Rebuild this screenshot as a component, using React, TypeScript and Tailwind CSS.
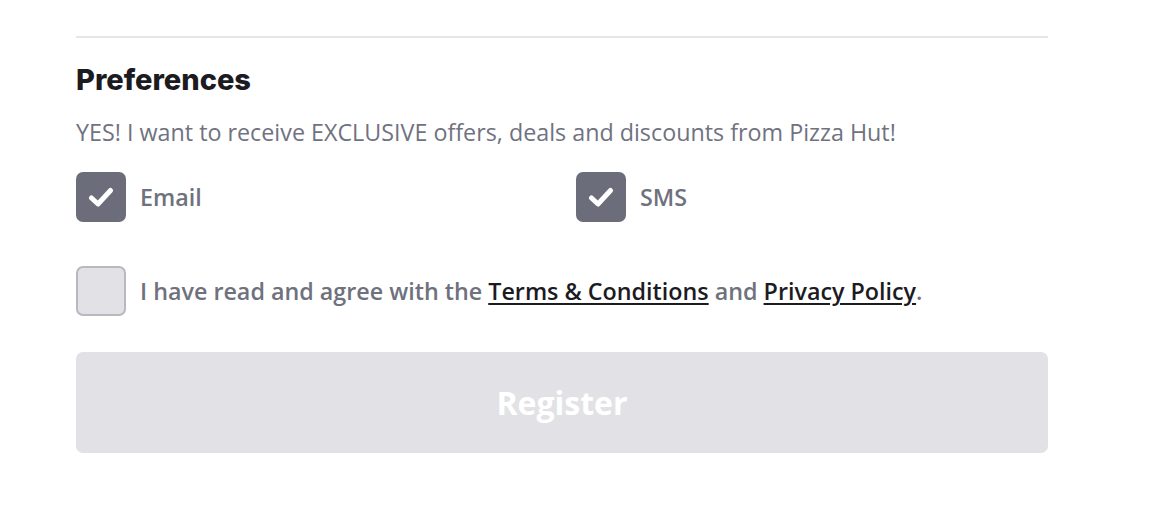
import React from "react";

function Check() {
  return (
    <svg width="26" height="22" viewBox="0 0 26 22" fill="none">
      <path d="M3.5 12 L10 18 L22.5 4.5" stroke="white" strokeWidth="5" strokeLinecap="round" strokeLinejoin="round" />
    </svg>
  );
}

function CheckedBox() {
  return (
    <span className="flex h-[50px] w-[50px] shrink-0 items-center justify-center rounded-[7px] bg-[#6b6d7a]">
      <Check />
    </span>
  );
}

export default function App() {
  return (
    <div className="min-h-[514px] w-full bg-white" style={{ fontFamily: '"Open Sans", sans-serif' }}>
      <div className="ml-[76px] w-[972px] pt-[36px]">
        <div className="h-[2px] bg-[#e6e6e8]" />
        <h2 className="mt-[22px] text-[29px] font-extrabold leading-[40px] text-[#1c1b1f]" style={{ fontFamily: 'Inter, sans-serif' }}>
          Preferences
        </h2>
        <p className="mt-[16px] text-[23.3px] leading-[32px] text-[#707280]">
          YES! I want to receive EXCLUSIVE offers, deals and discounts from Pizza Hut!
        </p>
        <div className="mt-[24px] grid grid-cols-[500px_1fr]">
          <label className="flex items-center gap-[14px]">
            <CheckedBox />
            <span className="text-[23.3px] font-semibold text-[#6f717d]">Email</span>
          </label>
          <label className="flex items-center gap-[14px]">
            <CheckedBox />
            <span className="text-[23.3px] font-semibold text-[#6f717d]">SMS</span>
          </label>
        </div>
        <label className="mt-[44px] flex items-center gap-[14px]">
          <span className="h-[50px] w-[50px] shrink-0 rounded-[7px] border-2 border-[#b8b8c0] bg-[#e1e1e6]" />
          <span className="text-[23.3px] font-semibold text-[#6f717d]">
            I have read and agree with the{" "}
            <a className="text-[#1c1b1f] underline decoration-[1.5px] underline-offset-[3px]">Terms &amp; Conditions</a> and{" "}
            <a className="text-[#1c1b1f] underline decoration-[1.5px] underline-offset-[3px]">Privacy Policy</a>.
          </span>
        </label>
        <button className="mt-[36px] flex h-[101px] w-full items-center justify-center rounded-[7px] bg-[#e2e2e6] text-[32px] font-bold text-white">
          Register
        </button>
      </div>
    </div>
  );
}
